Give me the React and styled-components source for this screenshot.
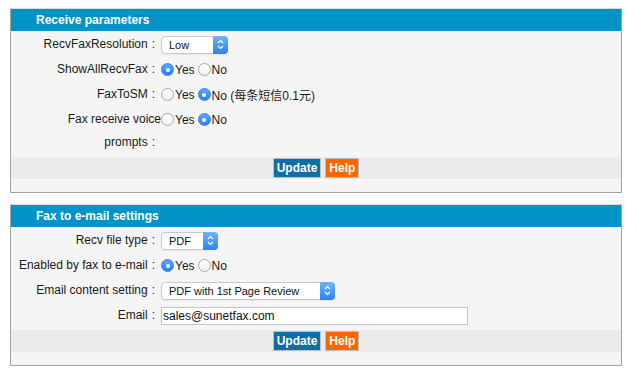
import React from "react";
import styled, { createGlobalStyle } from "styled-components";

const GlobalStyle = createGlobalStyle`
  html, body {
    margin: 0;
    padding: 0;
    background: #ffffff;
  }
  body {
    font-family: "Liberation Sans", Arial, "Noto Sans CJK SC", sans-serif;
    font-size: 12px;
    color: #1a1a1a;
  }
`;

const Page = styled.div`
  padding: 8px 0 0 10px;
  display: flex;
  flex-direction: column;
  gap: 11px;
`;

const Panel = styled.section`
  width: 610px;
  background: #f5f5f5;
  border: 1px solid #a3a3a3;
  border-top-color: #dcdcdc;
`;

const Header = styled.div`
  height: 22px;
  line-height: 22px;
  background: #0093c8;
  color: #ffffff;
  font-weight: bold;
  font-size: 12px;
  padding-left: 25px;
`;

const Body = styled.div`
  padding: 1px 0 2px;
`;

const Row = styled.div`
  display: grid;
  grid-template-columns: 150px 1fr;
  align-items: start;
  padding: 1px 0;
`;

const Label = styled.div`
  text-align: right;
  line-height: 23px;
  font-size: 12px;
  color: #1a1a1a;
`;

const Colon = styled.span`
  margin: 0 6px 0 4px;
`;

const Control = styled.div`
  height: 23px;
  display: flex;
  align-items: center;
`;

const SelectBox = styled.div`
  width: ${(p) => p.$w}px;
  height: 18px;
  box-sizing: border-box;
  display: flex;
  background: #ffffff;
  border: 1px solid #c9c9c9;
  border-radius: 4px;
  box-shadow: 0 1px 1px rgba(0, 0, 0, 0.06);
`;

const SelectValue = styled.span`
  flex: 1;
  padding-left: 7px;
  font-size: 11px;
  line-height: 16px;
  color: #111;
  white-space: nowrap;
  overflow: hidden;
`;

const SelectArrow = styled.span`
  width: 15px;
  margin: -1px -1px -1px 0;
  border-radius: 0 4px 4px 0;
  background: linear-gradient(#6db4fb, #2c82f4);
  display: flex;
  align-items: center;
  justify-content: center;
`;

const RadioGroup = styled.div`
  display: flex;
  align-items: center;
  font-size: 12px;
  white-space: nowrap;
`;

const Option = styled.label`
  display: inline-flex;
  align-items: center;
  margin-right: ${(p) => (p.$last ? 0 : 3)}px;
`;

const Dot = styled.span`
  width: 13px;
  height: 13px;
  box-sizing: border-box;
  border-radius: 50%;
  display: inline-flex;
  align-items: center;
  justify-content: center;
  margin-right: 1px;
  border: 1px solid ${(p) => (p.$on ? "#2f86f3" : "#a8a8a8")};
  background: ${(p) =>
    p.$on ? "linear-gradient(#5aa6f9, #2a80f3)" : "linear-gradient(#ffffff, #f0f0f0)"};
  &::after {
    content: "";
    width: 4px;
    height: 4px;
    border-radius: 50%;
    background: #ffffff;
    display: ${(p) => (p.$on ? "block" : "none")};
  }
`;

const TextInput = styled.input`
  width: 307px;
  height: 18px;
  box-sizing: border-box;
  border: 1px solid #c4c4c4;
  background: #ffffff;
  padding: 0 1px;
  font-family: "Liberation Sans", Arial, sans-serif;
  font-size: 12px;
  color: #111;
  outline: none;
`;

const ButtonBar = styled.div`
  height: 22px;
  background: #ebebeb;
  display: flex;
  align-items: center;
  justify-content: center;
  gap: 4px;
`;

const Button = styled.button`
  height: 20px;
  padding: 0 3px;
  border: 1px solid #b9c2c8;
  background: ${(p) => (p.$help ? "#ff6600" : "#0e6ea6")};
  color: #ffffff;
  font-family: "Liberation Sans", Arial, sans-serif;
  font-weight: bold;
  font-size: 12px;
  line-height: 18px;
  cursor: pointer;
`;

const Footer = styled.div`
  height: 13px;
  border-top: 1px solid #fafafa;
  box-sizing: border-box;
`;

const Chevrons = () => (
  <svg width="7" height="11" viewBox="0 0 7 11">
    <path d="M1 4 L3.5 1.5 L6 4" fill="none" stroke="#fff" strokeWidth="1.2" />
    <path d="M1 7 L3.5 9.5 L6 7" fill="none" stroke="#fff" strokeWidth="1.2" />
  </svg>
);

const Select = ({ width, value }) => (
  <SelectBox $w={width}>
    <SelectValue>{value}</SelectValue>
    <SelectArrow>
      <Chevrons />
    </SelectArrow>
  </SelectBox>
);

const Radios = ({ yes, extra }) => (
  <RadioGroup>
    <Option>
      <Dot $on={yes} />
      Yes
    </Option>
    <Option $last>
      <Dot $on={!yes} />
      No{extra}
    </Option>
  </RadioGroup>
);

const Field = ({ label, children }) => (
  <Row>
    <Label>
      {label}
      <Colon>:</Colon>
    </Label>
    <Control>{children}</Control>
  </Row>
);

const Buttons = () => (
  <>
    <ButtonBar>
      <Button>Update</Button>
      <Button $help>Help</Button>
    </ButtonBar>
    <Footer />
  </>
);

export default function App() {
  return (
    <>
      <GlobalStyle />
      <Page>
        <Panel>
          <Header>Receive parameters</Header>
          <Body>
            <Field label="RecvFaxResolution">
              <Select width={67} value="Low" />
            </Field>
            <Field label="ShowAllRecvFax">
              <Radios yes />
            </Field>
            <Field label="FaxToSM">
              <Radios yes={false} extra=" (每条短信0.1元)" />
            </Field>
            <Field label="Fax receive voice prompts">
              <Radios yes={false} />
            </Field>
          </Body>
          <Buttons />
        </Panel>

        <Panel>
          <Header>Fax to e-mail settings</Header>
          <Body>
            <Field label="Recv file type">
              <Select width={57} value="PDF" />
            </Field>
            <Field label="Enabled by fax to e-mail">
              <Radios yes />
            </Field>
            <Field label="Email content setting">
              <Select width={174} value="PDF with 1st Page Review" />
            </Field>
            <Field label="Email">
              <TextInput defaultValue="sales@sunetfax.com" />
            </Field>
          </Body>
          <Buttons />
        </Panel>
      </Page>
    </>
  );
}
